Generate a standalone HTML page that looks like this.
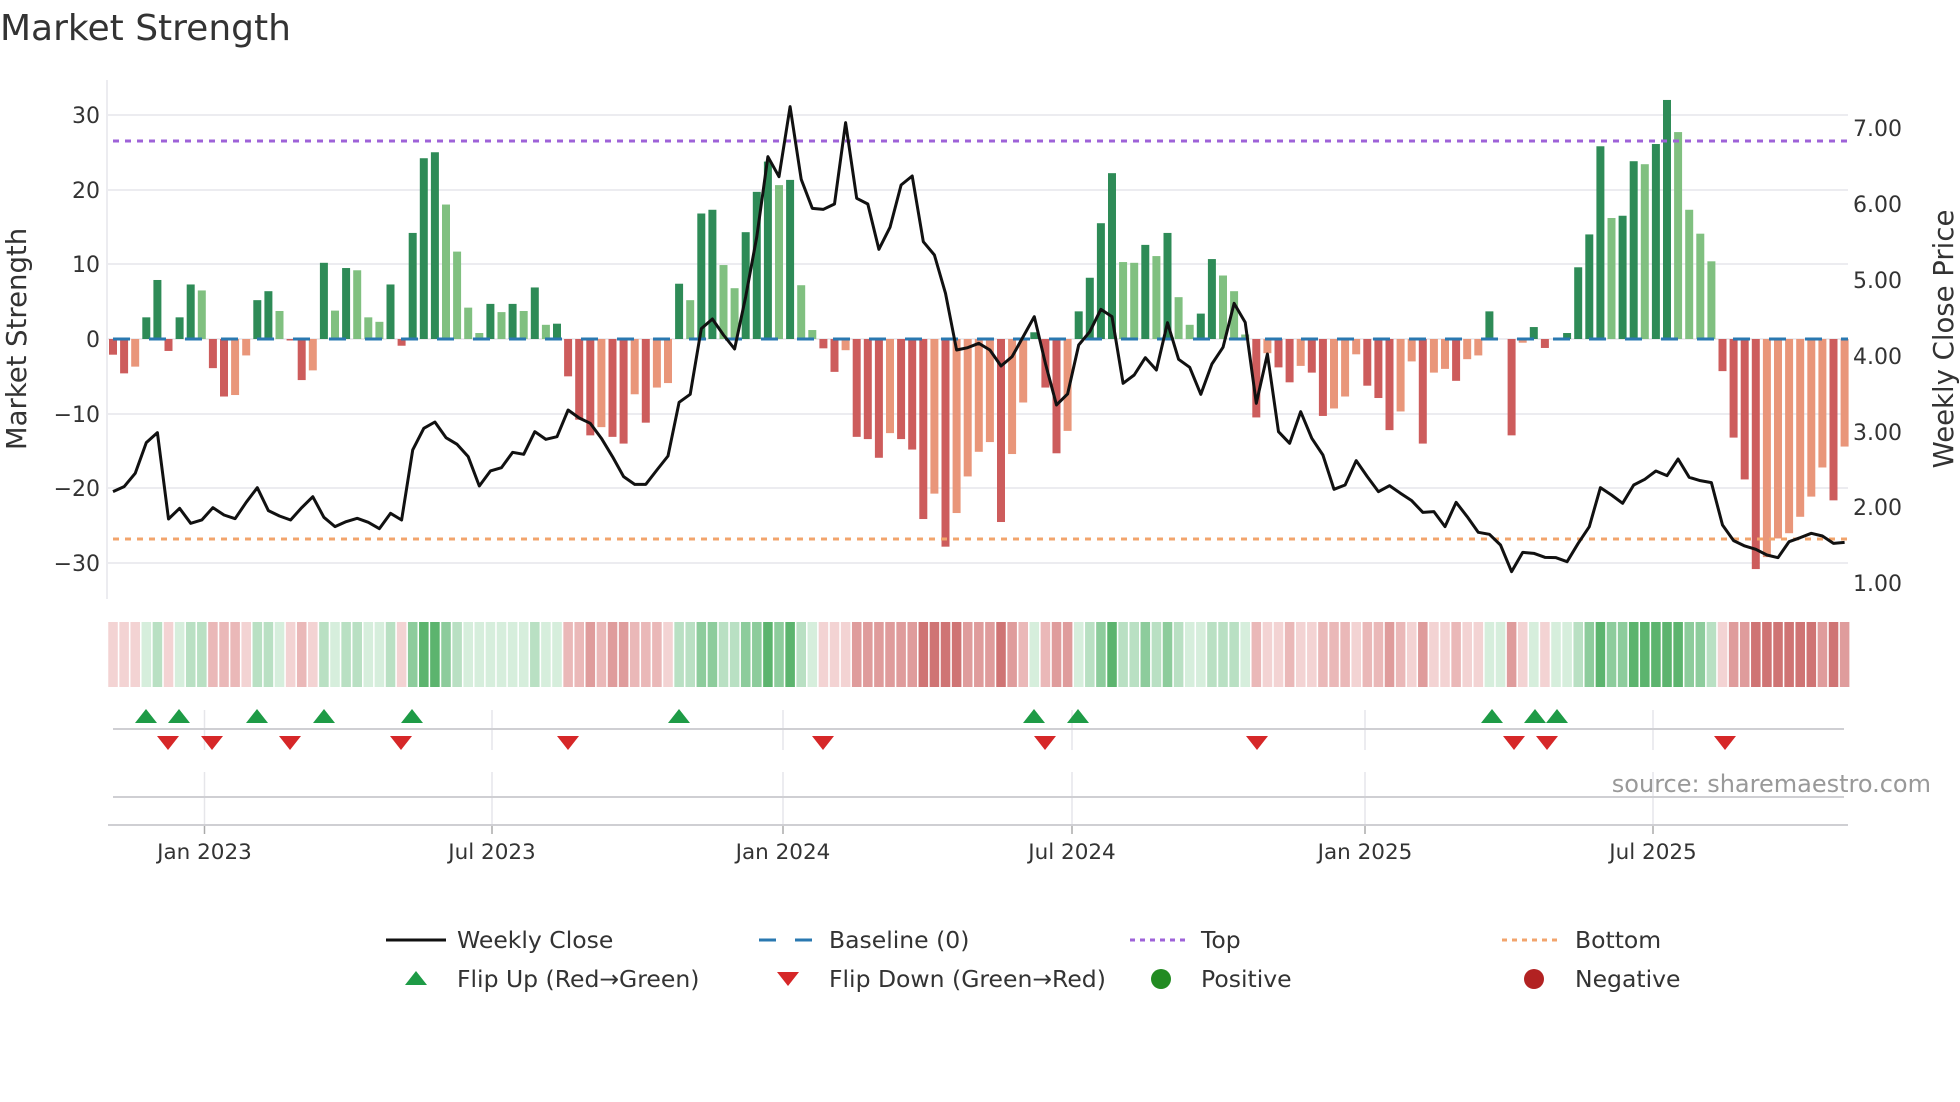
<!DOCTYPE html>
<html><head><meta charset="utf-8"><style>
html,body{margin:0;padding:0;background:#fff;}
svg{display:block;font-family:"DejaVu Sans","Liberation Sans",sans-serif;}
.d1{fill:#2e8b57}.l1{fill:#80c080}.d2{fill:#cd5c5c}.l2{fill:#e9967a}
.g1{fill:#d6eedc}.g2{fill:#b9e0c3}.g3{fill:#8dcc9c}.g4{fill:#5cb46e}
.r1{fill:#f3d3d3}.r2{fill:#eab8b8}.r3{fill:#df9c9c}.r4{fill:#cf7474}
</style></head><body>
<svg width="1960" height="1102" viewBox="0 0 1960 1102" xmlns="http://www.w3.org/2000/svg">
<text x="0" y="40" font-size="36" fill="#333">Market Strength</text>
<!-- grid -->
<g stroke="#ececf0" stroke-width="2">
<line x1="108" y1="115" x2="1848" y2="115"/><line x1="108" y1="190" x2="1848" y2="190"/><line x1="108" y1="264" x2="1848" y2="264"/><line x1="108" y1="339" x2="1848" y2="339"/><line x1="108" y1="414" x2="1848" y2="414"/><line x1="108" y1="488" x2="1848" y2="488"/><line x1="108" y1="563" x2="1848" y2="563"/>
</g>
<line x1="107" y1="80" x2="107" y2="599" stroke="#ececf0" stroke-width="2"/>
<g font-size="22" fill="#333" text-anchor="end">
<text x="100" y="123">30</text><text x="100" y="198">20</text><text x="100" y="272">10</text><text x="100" y="347">0</text><text x="100" y="422">−10</text><text x="100" y="496">−20</text><text x="100" y="571">−30</text>
</g>
<g font-size="22" fill="#333">
<text x="1853" y="136">7.00</text><text x="1853" y="212">6.00</text><text x="1853" y="288">5.00</text><text x="1853" y="364">4.00</text><text x="1853" y="440">3.00</text><text x="1853" y="515">2.00</text><text x="1853" y="591">1.00</text>
</g>
<text transform="translate(26,339) rotate(-90)" font-size="27.5" fill="#333" text-anchor="middle">Market Strength</text>
<text transform="translate(1953,339) rotate(-90)" font-size="27.5" fill="#333" text-anchor="middle">Weekly Close Price</text>
<!-- bars -->
<g transform="translate(109,339) scale(11.1,-7.47)">
<rect class="d2" x="0" y="-2.1" width=".72" height="2.1"/><rect class="d2" x="1" y="-4.6" width=".72" height="4.6"/><rect class="l2" x="2" y="-3.7" width=".72" height="3.7"/><rect class="d1" x="3" y="0" width=".72" height="2.9"/><rect class="d1" x="4" y="0" width=".72" height="7.9"/><rect class="d2" x="5" y="-1.6" width=".72" height="1.6"/><rect class="d1" x="6" y="0" width=".72" height="2.9"/><rect class="d1" x="7" y="0" width=".72" height="7.3"/><rect class="l1" x="8" y="0" width=".72" height="6.5"/><rect class="d2" x="9" y="-3.9" width=".72" height="3.9"/>
<rect class="d2" x="10" y="-7.7" width=".72" height="7.7"/><rect class="l2" x="11" y="-7.5" width=".72" height="7.5"/><rect class="l2" x="12" y="-2.2" width=".72" height="2.2"/><rect class="d1" x="13" y="0" width=".72" height="5.2"/><rect class="d1" x="14" y="0" width=".72" height="6.4"/><rect class="l1" x="15" y="0" width=".72" height="3.75"/><rect class="d2" x="16" y="-0.2" width=".72" height="0.2"/><rect class="d2" x="17" y="-5.5" width=".72" height="5.5"/><rect class="l2" x="18" y="-4.2" width=".72" height="4.2"/><rect class="d1" x="19" y="0" width=".72" height="10.2"/>
<rect class="l1" x="20" y="0" width=".72" height="3.8"/><rect class="d1" x="21" y="0" width=".72" height="9.5"/><rect class="l1" x="22" y="0" width=".72" height="9.2"/><rect class="l1" x="23" y="0" width=".72" height="2.9"/><rect class="l1" x="24" y="0" width=".72" height="2.3"/><rect class="d1" x="25" y="0" width=".72" height="7.3"/><rect class="d2" x="26" y="-0.9" width=".72" height="0.9"/><rect class="d1" x="27" y="0" width=".72" height="14.2"/><rect class="d1" x="28" y="0" width=".72" height="24.2"/><rect class="d1" x="29" y="0" width=".72" height="25"/>
<rect class="l1" x="30" y="0" width=".72" height="18"/><rect class="l1" x="31" y="0" width=".72" height="11.7"/><rect class="l1" x="32" y="0" width=".72" height="4.2"/><rect class="l1" x="33" y="0" width=".72" height="0.8"/><rect class="d1" x="34" y="0" width=".72" height="4.7"/><rect class="l1" x="35" y="0" width=".72" height="3.6"/><rect class="d1" x="36" y="0" width=".72" height="4.7"/><rect class="l1" x="37" y="0" width=".72" height="3.75"/><rect class="d1" x="38" y="0" width=".72" height="6.9"/><rect class="l1" x="39" y="0" width=".72" height="1.9"/>
<rect class="d1" x="40" y="0" width=".72" height="2.05"/><rect class="d2" x="41" y="-5" width=".72" height="5"/><rect class="d2" x="42" y="-10.8" width=".72" height="10.8"/><rect class="d2" x="43" y="-12.9" width=".72" height="12.9"/><rect class="l2" x="44" y="-11.8" width=".72" height="11.8"/><rect class="d2" x="45" y="-13.1" width=".72" height="13.1"/><rect class="d2" x="46" y="-14" width=".72" height="14"/><rect class="l2" x="47" y="-7.4" width=".72" height="7.4"/><rect class="d2" x="48" y="-11.2" width=".72" height="11.2"/><rect class="l2" x="49" y="-6.5" width=".72" height="6.5"/>
<rect class="l2" x="50" y="-5.9" width=".72" height="5.9"/><rect class="d1" x="51" y="0" width=".72" height="7.4"/><rect class="l1" x="52" y="0" width=".72" height="5.2"/><rect class="d1" x="53" y="0" width=".72" height="16.8"/><rect class="d1" x="54" y="0" width=".72" height="17.3"/><rect class="l1" x="55" y="0" width=".72" height="9.9"/><rect class="l1" x="56" y="0" width=".72" height="6.8"/><rect class="d1" x="57" y="0" width=".72" height="14.3"/><rect class="d1" x="58" y="0" width=".72" height="19.7"/><rect class="d1" x="59" y="0" width=".72" height="23.75"/>
<rect class="l1" x="60" y="0" width=".72" height="20.6"/><rect class="d1" x="61" y="0" width=".72" height="21.3"/><rect class="l1" x="62" y="0" width=".72" height="7.2"/><rect class="l1" x="63" y="0" width=".72" height="1.2"/><rect class="d2" x="64" y="-1.25" width=".72" height="1.25"/><rect class="d2" x="65" y="-4.4" width=".72" height="4.4"/><rect class="l2" x="66" y="-1.5" width=".72" height="1.5"/><rect class="d2" x="67" y="-13.1" width=".72" height="13.1"/><rect class="d2" x="68" y="-13.4" width=".72" height="13.4"/><rect class="d2" x="69" y="-15.9" width=".72" height="15.9"/>
<rect class="l2" x="70" y="-12.6" width=".72" height="12.6"/><rect class="d2" x="71" y="-13.4" width=".72" height="13.4"/><rect class="d2" x="72" y="-14.8" width=".72" height="14.8"/><rect class="d2" x="73" y="-24.1" width=".72" height="24.1"/><rect class="l2" x="74" y="-20.7" width=".72" height="20.7"/><rect class="d2" x="75" y="-27.8" width=".72" height="27.8"/><rect class="l2" x="76" y="-23.3" width=".72" height="23.3"/><rect class="l2" x="77" y="-18.4" width=".72" height="18.4"/><rect class="l2" x="78" y="-15.1" width=".72" height="15.1"/><rect class="l2" x="79" y="-13.8" width=".72" height="13.8"/>
<rect class="d2" x="80" y="-24.5" width=".72" height="24.5"/><rect class="l2" x="81" y="-15.4" width=".72" height="15.4"/><rect class="l2" x="82" y="-8.5" width=".72" height="8.5"/><rect class="d1" x="83" y="0" width=".72" height="0.9"/><rect class="d2" x="84" y="-6.5" width=".72" height="6.5"/><rect class="d2" x="85" y="-15.3" width=".72" height="15.3"/><rect class="l2" x="86" y="-12.3" width=".72" height="12.3"/><rect class="d1" x="87" y="0" width=".72" height="3.7"/><rect class="d1" x="88" y="0" width=".72" height="8.2"/><rect class="d1" x="89" y="0" width=".72" height="15.5"/>
<rect class="d1" x="90" y="0" width=".72" height="22.2"/><rect class="l1" x="91" y="0" width=".72" height="10.3"/><rect class="l1" x="92" y="0" width=".72" height="10.2"/><rect class="d1" x="93" y="0" width=".72" height="12.6"/><rect class="l1" x="94" y="0" width=".72" height="11.1"/><rect class="d1" x="95" y="0" width=".72" height="14.2"/><rect class="l1" x="96" y="0" width=".72" height="5.6"/><rect class="l1" x="97" y="0" width=".72" height="1.9"/><rect class="d1" x="98" y="0" width=".72" height="3.4"/><rect class="d1" x="99" y="0" width=".72" height="10.7"/>
<rect class="l1" x="100" y="0" width=".72" height="8.5"/><rect class="l1" x="101" y="0" width=".72" height="6.4"/><rect class="l1" x="102" y="0" width=".72" height="0.6"/><rect class="d2" x="103" y="-10.5" width=".72" height="10.5"/><rect class="l2" x="104" y="-1.9" width=".72" height="1.9"/><rect class="d2" x="105" y="-3.8" width=".72" height="3.8"/><rect class="d2" x="106" y="-5.8" width=".72" height="5.8"/><rect class="l2" x="107" y="-3.6" width=".72" height="3.6"/><rect class="d2" x="108" y="-4.5" width=".72" height="4.5"/><rect class="d2" x="109" y="-10.3" width=".72" height="10.3"/>
<rect class="l2" x="110" y="-9.3" width=".72" height="9.3"/><rect class="l2" x="111" y="-7.7" width=".72" height="7.7"/><rect class="l2" x="112" y="-2.05" width=".72" height="2.05"/><rect class="d2" x="113" y="-6.25" width=".72" height="6.25"/><rect class="d2" x="114" y="-7.9" width=".72" height="7.9"/><rect class="d2" x="115" y="-12.2" width=".72" height="12.2"/><rect class="l2" x="116" y="-9.7" width=".72" height="9.7"/><rect class="l2" x="117" y="-3" width=".72" height="3"/><rect class="d2" x="118" y="-14" width=".72" height="14"/><rect class="l2" x="119" y="-4.5" width=".72" height="4.5"/>
<rect class="l2" x="120" y="-4" width=".72" height="4"/><rect class="d2" x="121" y="-5.6" width=".72" height="5.6"/><rect class="l2" x="122" y="-2.7" width=".72" height="2.7"/><rect class="l2" x="123" y="-2.2" width=".72" height="2.2"/><rect class="d1" x="124" y="0" width=".72" height="3.7"/><rect class="d2" x="126" y="-12.9" width=".72" height="12.9"/><rect class="l2" x="127" y="-0.5" width=".72" height="0.5"/><rect class="d1" x="128" y="0" width=".72" height="1.6"/><rect class="d2" x="129" y="-1.2" width=".72" height="1.2"/>
<rect class="d1" x="131" y="0" width=".72" height="0.8"/><rect class="d1" x="132" y="0" width=".72" height="9.6"/><rect class="d1" x="133" y="0" width=".72" height="14"/><rect class="d1" x="134" y="0" width=".72" height="25.8"/><rect class="l1" x="135" y="0" width=".72" height="16.2"/><rect class="d1" x="136" y="0" width=".72" height="16.5"/><rect class="d1" x="137" y="0" width=".72" height="23.8"/><rect class="l1" x="138" y="0" width=".72" height="23.4"/><rect class="d1" x="139" y="0" width=".72" height="26.1"/>
<rect class="d1" x="140" y="0" width=".72" height="32"/><rect class="l1" x="141" y="0" width=".72" height="27.7"/><rect class="l1" x="142" y="0" width=".72" height="17.3"/><rect class="l1" x="143" y="0" width=".72" height="14.1"/><rect class="l1" x="144" y="0" width=".72" height="10.4"/><rect class="d2" x="145" y="-4.3" width=".72" height="4.3"/><rect class="d2" x="146" y="-13.2" width=".72" height="13.2"/><rect class="d2" x="147" y="-18.8" width=".72" height="18.8"/><rect class="d2" x="148" y="-30.8" width=".72" height="30.8"/><rect class="l2" x="149" y="-29.2" width=".72" height="29.2"/>
<rect class="l2" x="150" y="-26.7" width=".72" height="26.7"/><rect class="l2" x="151" y="-26" width=".72" height="26"/><rect class="l2" x="152" y="-23.8" width=".72" height="23.8"/><rect class="l2" x="153" y="-21.1" width=".72" height="21.1"/><rect class="l2" x="154" y="-17.2" width=".72" height="17.2"/><rect class="d2" x="155" y="-21.6" width=".72" height="21.6"/><rect class="l2" x="156" y="-14.4" width=".72" height="14.4"/>
</g>
<!-- baseline / top / bottom -->
<line x1="113" y1="339" x2="1848" y2="339" stroke="#2a78b0" stroke-width="3" stroke-dasharray="17 19"/>
<line x1="113" y1="141" x2="1848" y2="141" stroke="#9e62d8" stroke-width="3" stroke-dasharray="6 6"/>
<line x1="113" y1="539" x2="1848" y2="539" stroke="#f2a46c" stroke-width="3" stroke-dasharray="6 6"/>
<!-- price line -->
<g transform="translate(113,90) scale(11.1,0.33333)">
<polyline fill="none" stroke="#111" stroke-width="3" stroke-linejoin="round" vector-effect="non-scaling-stroke" points="0,1205 1,1190 2,1150 3,1058 4,1028 5,1287 6,1255 7,1300 8,1290 9,1253 10,1275 11,1286 12,1237 13,1193 14,1262 15,1278 16,1290 17,1253 18,1220 19,1282 20,1310 21,1295 22,1285 23,1297 24,1316 25,1270 26,1290 27,1080 28,1015 29,996 30,1043 31,1063 32,1100 33,1188 34,1143 35,1133 36,1087 37,1093 38,1025 39,1048 40,1040 41,960 42,984 43,1000 44,1045 45,1100 46,1160 47,1183 48,1183 49,1140 50,1098 51,937 52,913 53,716 54,687 55,735 56,777 57,620 58,440 59,200 60,260 61,50 62,268 63,355 64,358 65,342 66,98 67,325 68,342 69,478 70,412 71,285 72,258 73,455 74,495 75,610 76,780 77,773 78,760 79,780 80,828 81,800 82,740 83,680 84,820 85,945 86,912 87,765 88,725 89,658 90,680 91,880 92,855 93,803 94,840 95,698 96,808 97,832 98,913 99,822 100,772 101,640 102,697 103,940 104,792 105,1025 106,1060 107,965 108,1045 109,1095 110,1198 111,1185 112,1112 113,1160 114,1205 115,1187 116,1210 117,1232 118,1267 119,1265 120,1310 121,1237 122,1280 123,1327 124,1333 125,1365 126,1445 127,1387 128,1390 129,1402 130,1403 131,1415 132,1360 133,1310 134,1193 135,1215 136,1240 137,1185 138,1168 139,1143 140,1157 141,1107 142,1162 143,1172 144,1178 145,1305 146,1352 147,1368 148,1378 149,1395 150,1403 151,1355 152,1343 153,1330 154,1338 155,1360 156,1357"/>
</g>
<!-- heat strip -->
<g transform="translate(108.25,622) scale(11.1,1)">
<rect class="r1" x="0" width=".86" height="65"/><rect class="r1" x="1" width=".86" height="65"/><rect class="r1" x="2" width=".86" height="65"/><rect class="g1" x="3" width=".86" height="65"/><rect class="g2" x="4" width=".86" height="65"/><rect class="r1" x="5" width=".86" height="65"/><rect class="g1" x="6" width=".86" height="65"/><rect class="g2" x="7" width=".86" height="65"/><rect class="g2" x="8" width=".86" height="65"/><rect class="r2" x="9" width=".86" height="65"/>
<rect class="r2" x="10" width=".86" height="65"/><rect class="r2" x="11" width=".86" height="65"/><rect class="r1" x="12" width=".86" height="65"/><rect class="g2" x="13" width=".86" height="65"/><rect class="g2" x="14" width=".86" height="65"/><rect class="g1" x="15" width=".86" height="65"/><rect class="r1" x="16" width=".86" height="65"/><rect class="r2" x="17" width=".86" height="65"/><rect class="r1" x="18" width=".86" height="65"/><rect class="g2" x="19" width=".86" height="65"/>
<rect class="g1" x="20" width=".86" height="65"/><rect class="g2" x="21" width=".86" height="65"/><rect class="g2" x="22" width=".86" height="65"/><rect class="g1" x="23" width=".86" height="65"/><rect class="g1" x="24" width=".86" height="65"/><rect class="g2" x="25" width=".86" height="65"/><rect class="r1" x="26" width=".86" height="65"/><rect class="g3" x="27" width=".86" height="65"/><rect class="g4" x="28" width=".86" height="65"/><rect class="g4" x="29" width=".86" height="65"/>
<rect class="g3" x="30" width=".86" height="65"/><rect class="g2" x="31" width=".86" height="65"/><rect class="g1" x="32" width=".86" height="65"/><rect class="g1" x="33" width=".86" height="65"/><rect class="g1" x="34" width=".86" height="65"/><rect class="g1" x="35" width=".86" height="65"/><rect class="g1" x="36" width=".86" height="65"/><rect class="g1" x="37" width=".86" height="65"/><rect class="g2" x="38" width=".86" height="65"/><rect class="g1" x="39" width=".86" height="65"/>
<rect class="g1" x="40" width=".86" height="65"/><rect class="r2" x="41" width=".86" height="65"/><rect class="r2" x="42" width=".86" height="65"/><rect class="r3" x="43" width=".86" height="65"/><rect class="r2" x="44" width=".86" height="65"/><rect class="r3" x="45" width=".86" height="65"/><rect class="r3" x="46" width=".86" height="65"/><rect class="r2" x="47" width=".86" height="65"/><rect class="r2" x="48" width=".86" height="65"/><rect class="r2" x="49" width=".86" height="65"/>
<rect class="r1" x="50" width=".86" height="65"/><rect class="g2" x="51" width=".86" height="65"/><rect class="g2" x="52" width=".86" height="65"/><rect class="g3" x="53" width=".86" height="65"/><rect class="g3" x="54" width=".86" height="65"/><rect class="g2" x="55" width=".86" height="65"/><rect class="g2" x="56" width=".86" height="65"/><rect class="g3" x="57" width=".86" height="65"/><rect class="g3" x="58" width=".86" height="65"/><rect class="g4" x="59" width=".86" height="65"/>
<rect class="g3" x="60" width=".86" height="65"/><rect class="g4" x="61" width=".86" height="65"/><rect class="g2" x="62" width=".86" height="65"/><rect class="g1" x="63" width=".86" height="65"/><rect class="r1" x="64" width=".86" height="65"/><rect class="r1" x="65" width=".86" height="65"/><rect class="r1" x="66" width=".86" height="65"/><rect class="r3" x="67" width=".86" height="65"/><rect class="r3" x="68" width=".86" height="65"/><rect class="r3" x="69" width=".86" height="65"/>
<rect class="r3" x="70" width=".86" height="65"/><rect class="r3" x="71" width=".86" height="65"/><rect class="r3" x="72" width=".86" height="65"/><rect class="r4" x="73" width=".86" height="65"/><rect class="r4" x="74" width=".86" height="65"/><rect class="r4" x="75" width=".86" height="65"/><rect class="r4" x="76" width=".86" height="65"/><rect class="r3" x="77" width=".86" height="65"/><rect class="r3" x="78" width=".86" height="65"/><rect class="r3" x="79" width=".86" height="65"/>
<rect class="r4" x="80" width=".86" height="65"/><rect class="r3" x="81" width=".86" height="65"/><rect class="r2" x="82" width=".86" height="65"/><rect class="g1" x="83" width=".86" height="65"/><rect class="r2" x="84" width=".86" height="65"/><rect class="r3" x="85" width=".86" height="65"/><rect class="r3" x="86" width=".86" height="65"/><rect class="g1" x="87" width=".86" height="65"/><rect class="g2" x="88" width=".86" height="65"/><rect class="g3" x="89" width=".86" height="65"/>
<rect class="g4" x="90" width=".86" height="65"/><rect class="g2" x="91" width=".86" height="65"/><rect class="g2" x="92" width=".86" height="65"/><rect class="g3" x="93" width=".86" height="65"/><rect class="g2" x="94" width=".86" height="65"/><rect class="g3" x="95" width=".86" height="65"/><rect class="g2" x="96" width=".86" height="65"/><rect class="g1" x="97" width=".86" height="65"/><rect class="g1" x="98" width=".86" height="65"/><rect class="g2" x="99" width=".86" height="65"/>
<rect class="g2" x="100" width=".86" height="65"/><rect class="g2" x="101" width=".86" height="65"/><rect class="g1" x="102" width=".86" height="65"/><rect class="r2" x="103" width=".86" height="65"/><rect class="r1" x="104" width=".86" height="65"/><rect class="r1" x="105" width=".86" height="65"/><rect class="r2" x="106" width=".86" height="65"/><rect class="r1" x="107" width=".86" height="65"/><rect class="r1" x="108" width=".86" height="65"/><rect class="r2" x="109" width=".86" height="65"/>
<rect class="r2" x="110" width=".86" height="65"/><rect class="r2" x="111" width=".86" height="65"/><rect class="r1" x="112" width=".86" height="65"/><rect class="r2" x="113" width=".86" height="65"/><rect class="r2" x="114" width=".86" height="65"/><rect class="r3" x="115" width=".86" height="65"/><rect class="r2" x="116" width=".86" height="65"/><rect class="r1" x="117" width=".86" height="65"/><rect class="r3" x="118" width=".86" height="65"/><rect class="r1" x="119" width=".86" height="65"/>
<rect class="r1" x="120" width=".86" height="65"/><rect class="r2" x="121" width=".86" height="65"/><rect class="r1" x="122" width=".86" height="65"/><rect class="r1" x="123" width=".86" height="65"/><rect class="g1" x="124" width=".86" height="65"/><rect class="g1" x="125" width=".86" height="65"/><rect class="r3" x="126" width=".86" height="65"/><rect class="r1" x="127" width=".86" height="65"/><rect class="g1" x="128" width=".86" height="65"/><rect class="r1" x="129" width=".86" height="65"/>
<rect class="g1" x="130" width=".86" height="65"/><rect class="g1" x="131" width=".86" height="65"/><rect class="g2" x="132" width=".86" height="65"/><rect class="g3" x="133" width=".86" height="65"/><rect class="g4" x="134" width=".86" height="65"/><rect class="g3" x="135" width=".86" height="65"/><rect class="g3" x="136" width=".86" height="65"/><rect class="g4" x="137" width=".86" height="65"/><rect class="g4" x="138" width=".86" height="65"/><rect class="g4" x="139" width=".86" height="65"/>
<rect class="g4" x="140" width=".86" height="65"/><rect class="g4" x="141" width=".86" height="65"/><rect class="g3" x="142" width=".86" height="65"/><rect class="g3" x="143" width=".86" height="65"/><rect class="g2" x="144" width=".86" height="65"/><rect class="r1" x="145" width=".86" height="65"/><rect class="r3" x="146" width=".86" height="65"/><rect class="r3" x="147" width=".86" height="65"/><rect class="r4" x="148" width=".86" height="65"/><rect class="r4" x="149" width=".86" height="65"/>
<rect class="r4" x="150" width=".86" height="65"/><rect class="r4" x="151" width=".86" height="65"/><rect class="r4" x="152" width=".86" height="65"/><rect class="r4" x="153" width=".86" height="65"/><rect class="r3" x="154" width=".86" height="65"/><rect class="r4" x="155" width=".86" height="65"/><rect class="r3" x="156" width=".86" height="65"/>
</g>
<!-- markers panel -->
<g stroke="#e6e6ea" stroke-width="1.5">
<line x1="204.5" y1="710" x2="204.5" y2="750"/><line x1="492" y1="710" x2="492" y2="750"/><line x1="783" y1="710" x2="783" y2="750"/><line x1="1072" y1="710" x2="1072" y2="750"/><line x1="1365" y1="710" x2="1365" y2="750"/><line x1="1653" y1="710" x2="1653" y2="750"/>
<line x1="204.5" y1="772" x2="204.5" y2="825"/><line x1="492" y1="772" x2="492" y2="825"/><line x1="783" y1="772" x2="783" y2="825"/><line x1="1072" y1="772" x2="1072" y2="825"/><line x1="1365" y1="772" x2="1365" y2="825"/><line x1="1653" y1="772" x2="1653" y2="825"/>
</g>
<line x1="113" y1="729" x2="1844" y2="729" stroke="#cfcfd3" stroke-width="2"/>
<line x1="113" y1="797" x2="1844" y2="797" stroke="#cfcfd3" stroke-width="2"/>
<line x1="108" y1="825" x2="1848" y2="825" stroke="#cfcfd3" stroke-width="2"/>
<g stroke="#aaa" stroke-width="1.5">
<line x1="204.5" y1="826" x2="204.5" y2="834"/><line x1="492" y1="826" x2="492" y2="834"/><line x1="783" y1="826" x2="783" y2="834"/><line x1="1072" y1="826" x2="1072" y2="834"/><line x1="1365" y1="826" x2="1365" y2="834"/><line x1="1653" y1="826" x2="1653" y2="834"/>
</g>
<g fill="#1e9b46">
<path d="M135 723 L146 709 L157 723Z"/><path d="M168 723 L179 709 L190 723Z"/><path d="M246 723 L257 709 L268 723Z"/><path d="M313 723 L324 709 L335 723Z"/><path d="M401 723 L412 709 L423 723Z"/><path d="M668 723 L679 709 L690 723Z"/><path d="M1023 723 L1034 709 L1045 723Z"/><path d="M1067 723 L1078 709 L1089 723Z"/><path d="M1481 723 L1492 709 L1503 723Z"/><path d="M1524 723 L1535 709 L1546 723Z"/><path d="M1546 723 L1557 709 L1568 723Z"/>
</g>
<g fill="#d62728">
<path d="M157 736 L168 750 L179 736Z"/><path d="M201 736 L212 750 L223 736Z"/><path d="M279 736 L290 750 L301 736Z"/><path d="M390 736 L401 750 L412 736Z"/><path d="M557 736 L568 750 L579 736Z"/><path d="M812 736 L823 750 L834 736Z"/><path d="M1034 736 L1045 750 L1056 736Z"/><path d="M1246 736 L1257 750 L1268 736Z"/><path d="M1503 736 L1514 750 L1525 736Z"/><path d="M1536 736 L1547 750 L1558 736Z"/><path d="M1714 736 L1725 750 L1736 736Z"/>
</g>
<text x="1931" y="792" font-size="24" fill="#999" text-anchor="end">source: sharemaestro.com</text>
<g font-size="21.5" fill="#333" text-anchor="middle">
<text x="204.5" y="859">Jan 2023</text><text x="492" y="859">Jul 2023</text><text x="783" y="859">Jan 2024</text><text x="1072" y="859">Jul 2024</text><text x="1365" y="859">Jan 2025</text><text x="1653" y="859">Jul 2025</text>
</g>
<!-- legend -->
<line x1="386" y1="940" x2="446" y2="940" stroke="#111" stroke-width="3"/>
<line x1="759" y1="940" x2="812" y2="940" stroke="#2a78b0" stroke-width="3" stroke-dasharray="17 19"/>
<line x1="1130" y1="940" x2="1186" y2="940" stroke="#9e62d8" stroke-width="3" stroke-dasharray="5 5"/>
<line x1="1502" y1="940" x2="1558" y2="940" stroke="#f2a46c" stroke-width="3" stroke-dasharray="5 5"/>
<path d="M405 985 L416 971 L427 985Z" fill="#1e9b46"/>
<path d="M777 972 L788 986 L799 972Z" fill="#d62728"/>
<circle cx="1161" cy="979" r="10" fill="#228b22"/>
<circle cx="1534" cy="979" r="10" fill="#b22222"/>
<g font-size="23.5" fill="#333">
<text x="457" y="948">Weekly Close</text><text x="829" y="948">Baseline (0)</text><text x="1201" y="948">Top</text><text x="1575" y="948">Bottom</text>
<text x="457" y="987">Flip Up (Red→Green)</text><text x="829" y="987">Flip Down (Green→Red)</text><text x="1201" y="987">Positive</text><text x="1575" y="987">Negative</text>
</g>
</svg>
</body></html>
